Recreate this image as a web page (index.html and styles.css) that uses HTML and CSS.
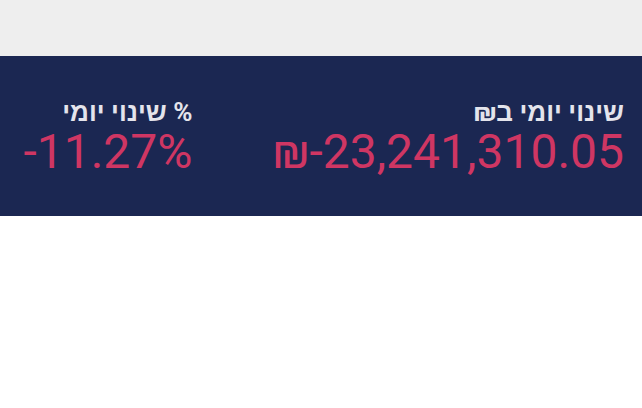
FILE: index.html
```html
<!DOCTYPE html>
<html lang="he" dir="rtl">
<head>
    <meta charset="utf-8">
    <title>שינוי יומי</title>
    <link rel="stylesheet" href="styles.css">
</head>
<body>
    <div class="topbar"></div>

    <div class="stats">
        <div class="stat">
            <div class="stat-label">שינוי יומי ב₪</div>
            <div class="stat-value" dir="ltr">₪-23,241,310.05</div>
        </div>
        <div class="stat">
            <div class="stat-label">% שינוי יומי</div>
            <div class="stat-value" dir="ltr">-11.27%</div>
        </div>
    </div>
</body>
</html>
```

FILE: styles.css
```css
body { margin: 0; font-family: Roboto, "Liberation Sans", sans-serif; background: #fff; }
.topbar { height: 56px; background: #eeeeee; }
.stats { height: 160px; background: #1b2752; display: flex; align-items: center; gap: 80px; padding: 8px 18px 0; box-sizing: border-box; }
.stat { display: flex; flex-direction: column; align-items: flex-start; }
.stat-label { color: #e4e4ec; font-size: 26px; font-weight: bold; line-height: 24px; }
.stat-value { color: #cf3663; font-size: 48px; line-height: 56px; }
```
